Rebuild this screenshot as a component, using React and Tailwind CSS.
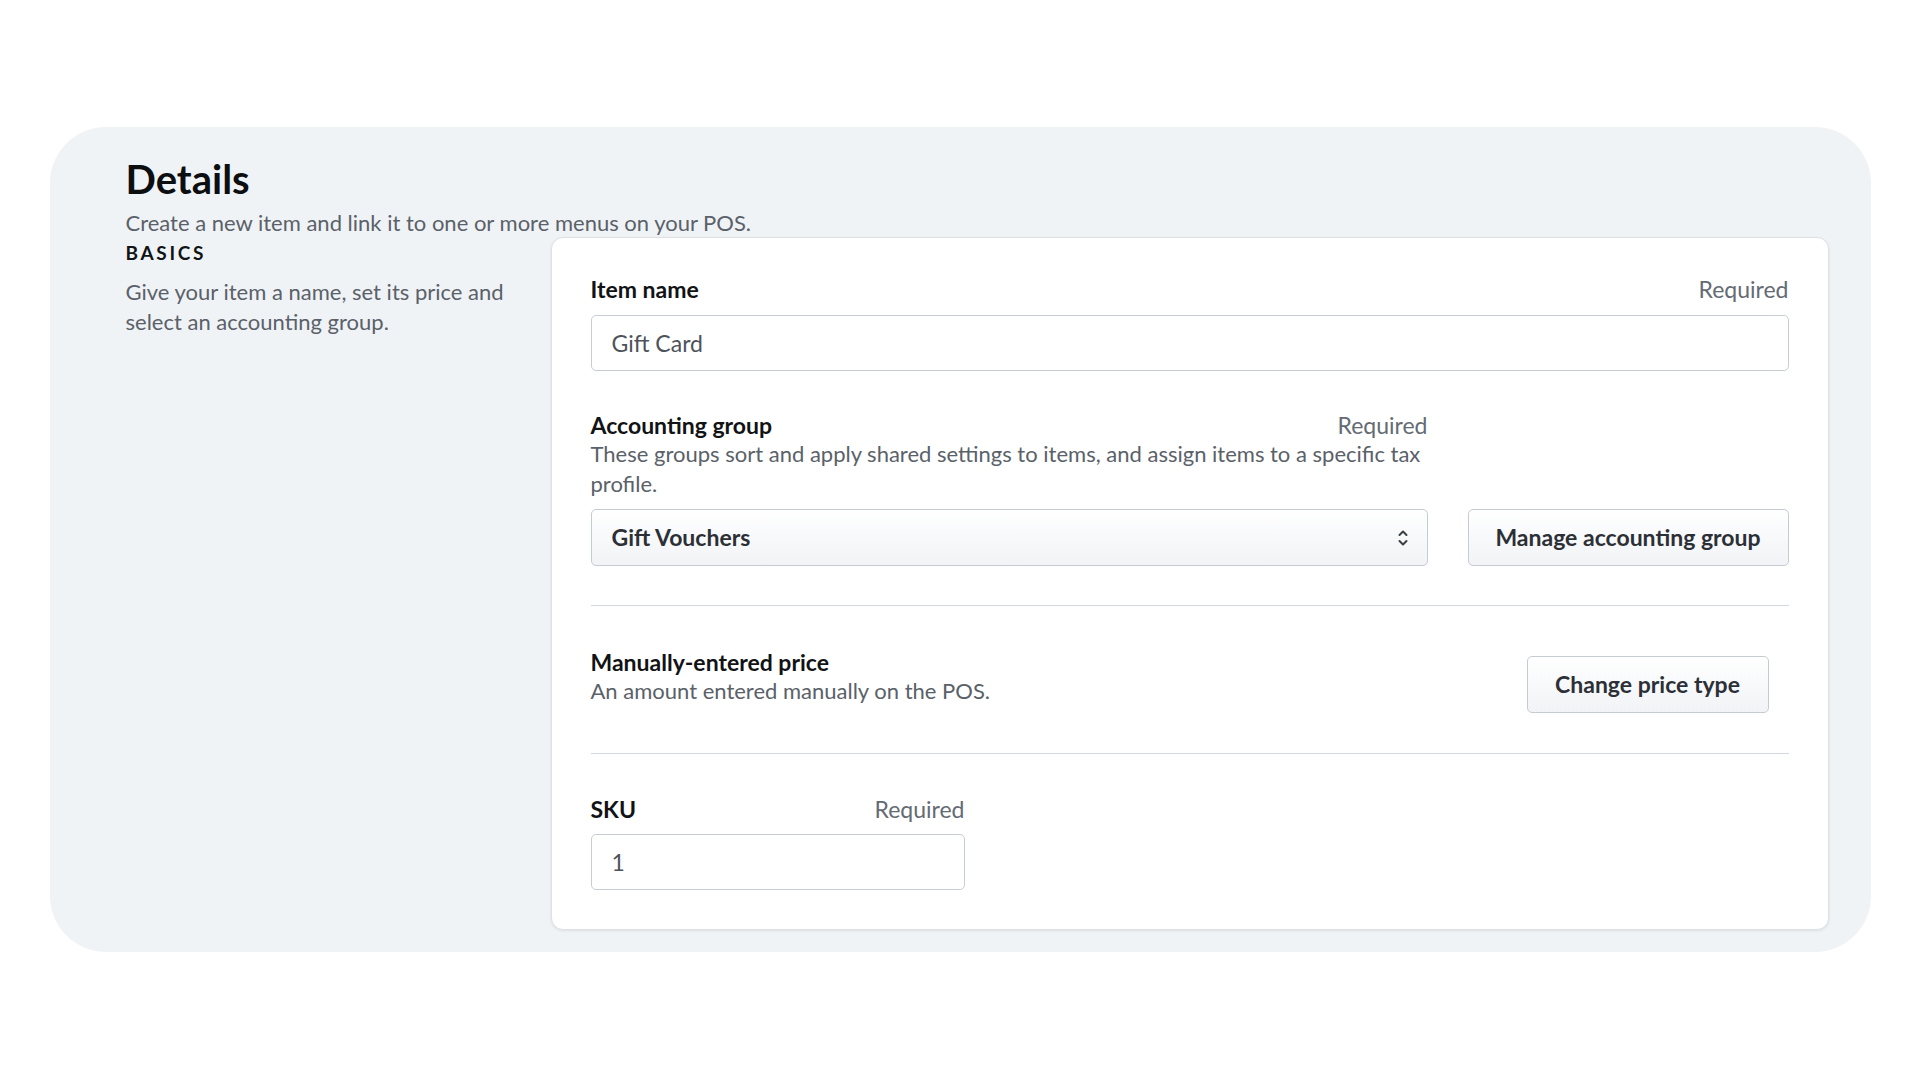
import React, { useState } from 'react';

const labelText = 'text-[23px] leading-[28px]';

const Chevrons = () => (
    <svg className="w-[12px] h-[22px]" viewBox="0 0 12 22" fill="none" stroke="#3a3f45" strokeWidth={2} strokeLinecap="round" strokeLinejoin="round">
        <path d="M2.5 8l3.5-3.5 3.5 3.5" />
        <path d="M2.5 14l3.5 3.5 3.5-3.5" />
    </svg>
);

const FieldHeader = ({ label }) => (
    <div className="flex items-center justify-between">
        <span className={`${labelText} font-bold text-[#111315]`}>{label}</span>
        <span className={`${labelText} text-[#646b73]`}>Required</span>
    </div>
);

const App = () => {
    const [itemName, setItemName] = useState('Gift Card');
    const [sku, setSku] = useState('1');

    return (
        <div className="min-h-screen bg-white pt-[127px] font-['Lato','Noto_Sans',sans-serif]">
            <div className="mx-auto w-[1821px] rounded-[56px] bg-[#f0f3f6] pl-[76px] pr-[42px] pt-[28px] pb-[22px]">
                {/* Header */}
                <h1 className="text-[40px] leading-[48px] font-bold text-[#0d0e10]">Details</h1>
                <p className="mt-[6px] text-[22px] leading-[28px] text-[#5a6169]">
                    Create a new item and link it to one or more menus on your POS.
                </p>

                <div className="flex gap-[39px]">
                    {/* Section intro */}
                    <div className="w-[386px] shrink-0">
                        <h2 className="mt-[4px] text-[19px] leading-[24px] font-bold tracking-[0.14em] text-[#111315]">BASICS</h2>
                        <p className="mt-3 text-[22px] leading-[30px] text-[#5a6169]">
                            Give your item a name, set its price and select an accounting group.
                        </p>
                    </div>

                    {/* Form card */}
                    <div className="flex-1 rounded-[12px] border border-[#dde1e6] bg-white px-[39px] pt-[37px] pb-[39px] shadow-[0_1px_3px_rgba(0,0,0,0.08)]">
                        <FieldHeader label="Item name" />
                        <input
                            type="text"
                            value={itemName}
                            onChange={(e) => setItemName(e.target.value)}
                            className="mt-3 block h-[56px] w-full rounded-[5px] border border-[#c8cdd4] bg-white px-5 text-[23px] text-[#4d535b] outline-none"
                        />

                        <div className="mt-10 flex items-end gap-10">
                            <div className="flex-1">
                                <FieldHeader label="Accounting group" />
                                <p className="text-[22px] leading-[30px] text-[#5a6169]">
                                    These groups sort and apply shared settings to items, and assign items to a specific tax profile.
                                </p>
                                <button className="mt-[10px] flex h-[57px] w-full items-center justify-between rounded-[5px] border border-[#c5cbd2] bg-gradient-to-b from-white to-[#f1f3f6] pl-5 pr-[18px] text-[23px] font-bold text-[#2c3036]">
                                    <span>Gift Vouchers</span>
                                    <Chevrons />
                                </button>
                            </div>
                            <button className="h-[57px] w-[321px] rounded-[5px] border border-[#c5cbd2] bg-gradient-to-b from-white to-[#f1f3f6] text-[23px] font-bold text-[#2c3036]">
                                Manage accounting group
                            </button>
                        </div>

                        <div className="mt-[39px] border-t border-[#d3d8de]" />

                        <div className="flex items-start justify-between pt-[42px] pb-10">
                            <div>
                                <div className={`${labelText} font-bold text-[#111315]`}>Manually-entered price</div>
                                <div className="text-[22px] leading-[30px] text-[#5a6169]">An amount entered manually on the POS.</div>
                            </div>
                            <button className="mt-2 mr-5 h-[57px] w-[242px] rounded-[5px] border border-[#c5cbd2] bg-gradient-to-b from-white to-[#f1f3f6] text-[23px] font-bold text-[#2c3036]">
                                Change price type
                            </button>
                        </div>

                        <div className="border-t border-[#d3d8de]" />

                        <div className="w-[374px] pt-[41px]">
                            <FieldHeader label="SKU" />
                            <input
                                type="text"
                                value={sku}
                                onChange={(e) => setSku(e.target.value)}
                                className="mt-[11px] block h-[56px] w-full rounded-[5px] border border-[#c8cdd4] bg-white px-5 text-[23px] text-[#4d535b] outline-none"
                            />
                        </div>
                    </div>
                </div>
            </div>
        </div>
    );
};

export default App;
